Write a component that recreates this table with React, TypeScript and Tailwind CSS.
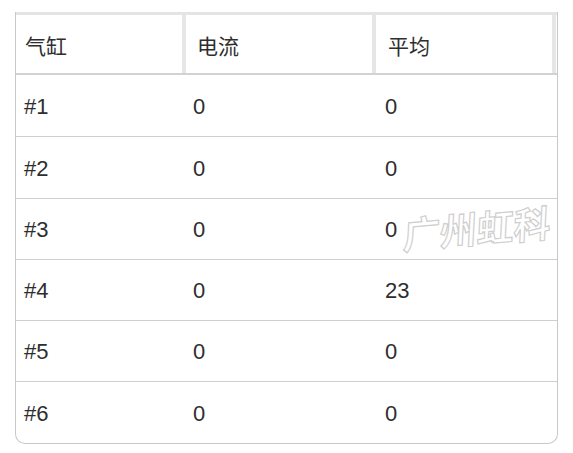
import React from "react";

const rows = [
  { c: "#1", a: "0", b: "0", h: "h-[62px]" },
  { c: "#2", a: "0", b: "0", h: "h-[62px]" },
  { c: "#3", a: "0", b: "0", h: "h-[61px]" },
  { c: "#4", a: "0", b: "23", h: "h-[61px]" },
  { c: "#5", a: "0", b: "0", h: "h-[61px]" },
  { c: "#6", a: "0", b: "0", h: "h-[61px]" },
];

export default function App() {
  return (
    <div
      className="w-[573px] h-[453px] bg-white relative"
      style={{ fontFamily: '"Liberation Sans", "Noto Sans CJK SC", sans-serif' }}
    >
      <div className="absolute left-[15px] top-[12px] w-[543px] h-[432px]">
        <div className="w-full h-full border-l border-r border-b border-[#c8c8c8] rounded-b-[10px] overflow-hidden text-[#2e2e2e]">
          <div className="grid grid-cols-[170px_190px_180px_1fr] h-[63px] border-t-[3px] border-[#e4e4e4] border-b-2 border-b-[#d2d2d2] text-[21px]">
            <div className="border-r-4 border-[#e6e6e6] pl-[9px] pt-[5px] flex items-center">气缸</div>
            <div className="border-r-4 border-[#e6e6e6] pl-[11px] pt-[5px] flex items-center">电流</div>
            <div className="border-r-4 border-[#e6e6e6] pl-[12px] pt-[5px] flex items-center">平均</div>
            <div />
          </div>
          {rows.map((r, i) => (
            <div
              key={r.c}
              className={`grid grid-cols-[170px_190px_180px_1fr] text-[22px] ${r.h} ${i < rows.length - 1 ? "border-b border-[#cfcfcf]" : ""}`}
            >
              <div className="pl-[8px] pt-[1px] flex items-center">{r.c}</div>
              <div className="pl-[7px] pt-[1px] flex items-center">{r.a}</div>
              <div className="pl-[9px] pt-[1px] flex items-center">{r.b}</div>
              <div />
            </div>
          ))}
        </div>
      </div>
      <div
        className="absolute left-[403px] top-[200px] text-[37px] font-bold text-white tracking-[0px] -rotate-[5deg] -skew-x-[8deg] [-webkit-text-stroke:1.2px_#cfcfcf] select-none"
        style={{ fontFamily: '"Noto Sans CJK SC", sans-serif' }}
      >
        广州虹科
      </div>
    </div>
  );
}
